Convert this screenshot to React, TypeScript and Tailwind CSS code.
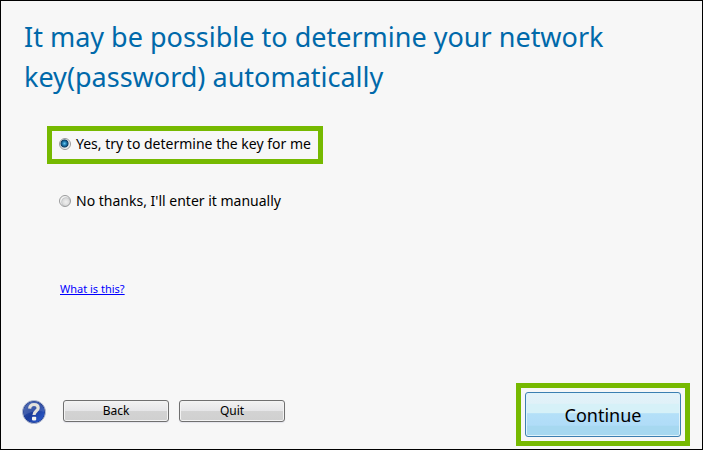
import { useState } from "react";

const radio =
  "m-0 h-3 w-3 shrink-0 appearance-none rounded-full border border-[#9a9b9c] bg-[radial-gradient(circle_at_60%_60%,#f0f0f0_0,#dcdcdc_40%,#c4c7c9_50%,#f4f4f4_62%)] checked:bg-[radial-gradient(circle_at_45%_45%,#6cc8ee_0,#1f7fb5_24%,#0c3c62_46%,#c9d3da_56%,#f4f4f4_68%)]";

const option = "flex h-[38px] items-center gap-[5px] pb-[2px]";

const smallButton =
  "h-[22px] w-[106px] rounded-[3px] border border-[#707070] bg-[linear-gradient(#f2f2f2_0%,#e6e6e8_48%,#d3d3d3_50%,#d0d0d0_100%)] text-xs leading-5 text-black shadow-[inset_0_0_0_1px_#f3f3f3,0_1px_1px_#e4e4ec]";

function HelpIcon() {
  return (
    <svg viewBox="0 0 24 24" className="h-6 w-6" aria-hidden="true">
      <defs>
        <linearGradient id="help-fill" x1="0" y1="0" x2="1" y2="1">
          <stop offset="0" stopColor="#3c5cab" />
          <stop offset="0.5" stopColor="#1c3c9a" />
          <stop offset="1" stopColor="#2f62d8" />
        </linearGradient>
      </defs>
      <circle cx="12" cy="12" r="11.5" fill="#1d3a8c" stroke="#b9c0d4" strokeWidth="1" />
      <circle cx="12" cy="12" r="10.5" fill="url(#help-fill)" />
      <path d="M1.5 12a10.500 10.500 0 0 1 21 0c-6-2-14-1-21 4z" fill="#fff" opacity="0.12" />
      <path
        d="M7.600 8.600C7.900 5.700 9.700 4.500 12 4.500c2.500 0 4.200 1.300 4.200 3.400 0 3.100-4.200 3.200-4.200 7"
        fill="none"
        stroke="#e4e2dc"
        strokeWidth="3.200"
      />
      <rect x="10" y="16.800" width="4.200" height="3.600" rx="0.800" fill="#f4f4f2" />
    </svg>
  );
}

export default function App() {
  const [choice, setChoice] = useState("auto");

  return (
    <main className="flex min-h-screen flex-col border border-black bg-[#f7f7f7] font-['Noto_Sans',sans-serif] text-black">
      <h1 className="px-[23px] pt-4 text-[27px] leading-10 text-[#0069aa]">
        It may be possible to determine your network key(password) automatically
      </h1>

      <fieldset className="mt-[29px] flex flex-col items-start gap-[19px] pl-[46px] text-sm leading-6">
        <label className={`${option} border-[5px] border-[#76b900] px-[7px]`}>
          <input
            type="radio"
            name="key-mode"
            className={radio}
            checked={choice === "auto"}
            onChange={() => setChoice("auto")}
          />
          Yes, try to determine the key for me
        </label>
        <label className={`${option} px-3`}>
          <input
            type="radio"
            name="key-mode"
            className={radio}
            checked={choice === "manual"}
            onChange={() => setChoice("manual")}
          />
          No thanks, I'll enter it manually
        </label>
      </fieldset>

      <p className="mt-[58px] pl-[59px] text-[11px] leading-5">
        <a href="#help" className="text-[#0000ff] underline">
          What is this?
        </a>
      </p>

      <footer className="mt-auto flex items-center pr-3 pb-[3px] pl-[21px]">
        <div className="flex items-start pb-[6px]">
          <button type="button" aria-label="Help" className="mr-[17px] h-6 w-6">
            <HelpIcon />
          </button>
          <div className="flex gap-[10px]">
            <button type="button" className={smallButton}>
              Back
            </button>
            <button type="button" className={smallButton}>
              Quit
            </button>
          </div>
        </div>
        <div className="ml-auto border-[5px] border-[#76b900] p-1">
          <button
            type="button"
            className="block h-[45px] w-[156px] rounded-[3px] border border-[#3c7fb1] bg-[linear-gradient(#e3f2f9_0%,#e0f1f8_24%,#d6f1f8_26%,#d6f1f8_46%,#b4e0f8_48%,#b0dcf8_75%,#a6d8f0_77%,#a6d8f0_100%)] text-lg shadow-[inset_0_0_0_1px_#dff3fb]"
          >
            Continue
          </button>
        </div>
      </footer>
    </main>
  );
}
